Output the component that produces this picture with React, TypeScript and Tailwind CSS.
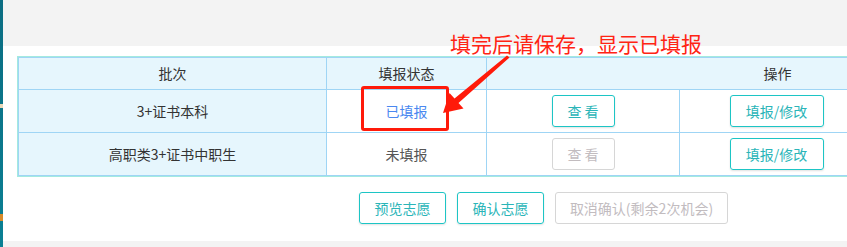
import React from "react";

const font = { fontFamily: '"Noto Sans CJK SC", "Noto Sans", sans-serif' };

const OutlineButton = ({ label, width, disabled }: { label: string; width: string; disabled?: boolean }) => (
  <div
    className={`${width} h-[32px] flex items-center justify-center rounded-[3px] border text-[14px] ${
      disabled
        ? "border-[#d6d6d6] text-[#c2bcbf]"
        : "border-[#1dc5c5] text-[#2ab5b8] shadow-[0_1px_2px_rgba(0,0,0,0.12)]"
    }`}
  >
    {label}
  </div>
);

const rows = [
  { batch: "3+证书本科", filled: true },
  { batch: "高职类3+证书中职生", filled: false },
];

export default function App() {
  return (
    <div className="relative w-[847px] h-[247px] overflow-hidden flex bg-[#f3f3f3] text-[#333]" style={font}>
      {/* sidebar edge */}
      <div className="w-[3px] shrink-0 bg-gradient-to-b from-[#0b6d82] to-[#0a8094] flex flex-col">
        <div className="mt-[104px] h-[4px] bg-[#e9d8b8]" />
        <div className="mt-[106px] h-[7px] bg-[#d88a2a]" />
      </div>

      <div className="flex-1 flex flex-col">
        <div className="h-[46px] shrink-0" />
        <div className="h-[195px] shrink-0 bg-white pl-[14px] pt-[10px]">
          <div className="w-[1053px] flex flex-col">
            {/* table */}
            <div className="border border-[#a4eadf]">
              <div className="grid grid-cols-[307px_159px_192px_193px_194px] gap-px bg-[#9fd5f5] p-px text-[14px]">
                <div className="h-[31px] bg-[#e6f6fd] flex items-center justify-center">批次</div>
                <div className="h-[31px] bg-[#e6f6fd] flex items-center justify-center">填报状态</div>
                <div className="col-span-3 h-[31px] bg-[#e6f6fd] flex items-center justify-center">操作</div>

                {rows.map((r) => (
                  <React.Fragment key={r.batch}>
                    <div className="h-[42px] bg-[#e6f6fd] flex items-center justify-center">{r.batch}</div>
                    <div
                      className={`h-[42px] bg-white flex items-center justify-center ${
                        r.filled ? "text-[#4a88f0]" : "text-[#555]"
                      }`}
                    >
                      {r.filled ? "已填报" : "未填报"}
                    </div>
                    <div className="h-[42px] bg-white flex items-center justify-center">
                      <OutlineButton label="查 看" width="w-[63px]" disabled={!r.filled} />
                    </div>
                    <div className="h-[42px] bg-white flex items-center justify-center">
                      <OutlineButton label="填报/修改" width="w-[94px]" />
                    </div>
                    <div className="h-[42px] bg-white" />
                  </React.Fragment>
                ))}
              </div>
            </div>

            <div className="mt-[15px] flex justify-center gap-[11px]">
              <OutlineButton label="预览志愿" width="w-[87px]" />
              <OutlineButton label="确认志愿" width="w-[87px]" />
              <OutlineButton label="取消确认(剩余2次机会)" width="w-[173px]" disabled />
            </div>
          </div>
        </div>
      </div>

      {/* annotation overlay */}
      <div className="absolute inset-0 pointer-events-none">
        <div className="absolute left-[450px] top-[30px] text-[21px] leading-[26px] text-[#ff2414] whitespace-nowrap">
          填完后请保存，显示已填报
        </div>
        <div className="absolute left-[361px] top-[86px] w-[88px] h-[45px] border-[3px] border-[#ff1a0a] rounded-[3px]" />
        <svg className="absolute left-0 top-0" width="847" height="247">
          <polygon
            points="507,55.5 454.5,98.5 449.5,93 443,113 463.5,108.5 458.5,103 509.5,57.5"
            fill="#ff1a0a"
          />
        </svg>
      </div>
    </div>
  );
}
